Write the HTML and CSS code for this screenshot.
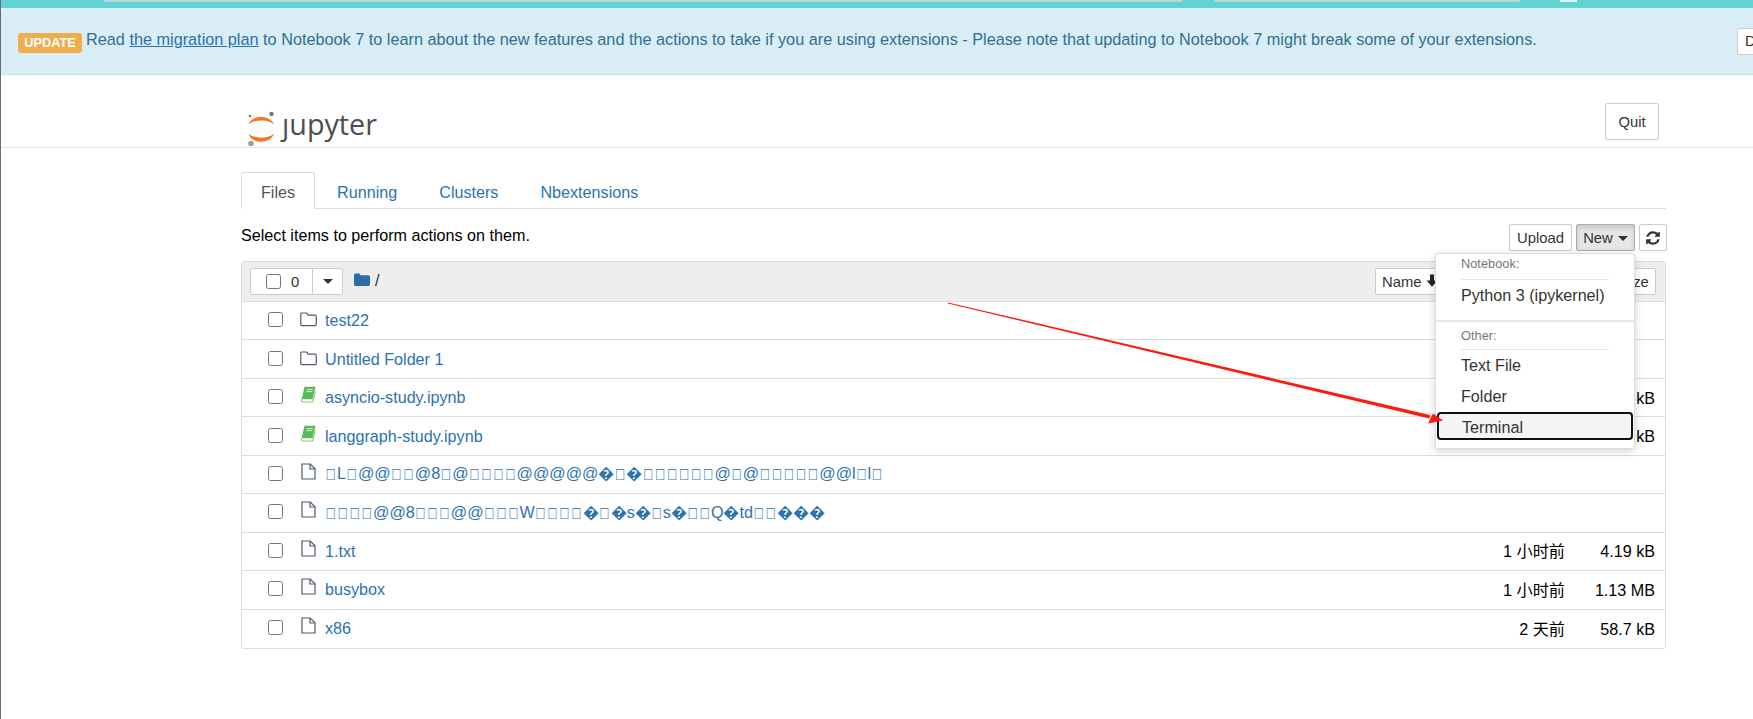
FILE: index.html
```html
<!DOCTYPE html>
<html lang="en">
<head>
<meta charset="utf-8">
<title>Jupyter Home</title>
<link rel="stylesheet" href="styles.css">
</head>
<body>
<svg class="defs" width="0" height="0" aria-hidden="true">
  <defs>
    <symbol id="i-folder" viewBox="0 0 17 15"><path d="M1.8 13.600h13.400a1 1 0 0 0 1-1V4.200a1 1 0 0 0-1-1H8.600a1 1 0 0 1-1-.8l-.2-.6a1 1 0 0 0-1-.8H1.800a1 1 0 0 0-1 1v10.600a1 1 0 0 0 1 1z" fill="none" stroke="#4d5a6c" stroke-width="1.200"/></symbol>
    <symbol id="i-book" viewBox="0 0 16 17"><path d="M4 .8h11l-3 12.400H1.200L4 .8z" fill="#5cb85c"/><path d="M1.200 13.200c-.8 1.600 0 2.800 1.400 2.800h9.600l2.600-11" fill="none" stroke="#8ccf7e" stroke-width="1.200"/><path d="M6.300 3.600h6M5.800 5.600h6" stroke="#d6efd2" stroke-width="1"/></symbol>
    <symbol id="i-file" viewBox="0 0 15 17"><path d="M1 1h8.200L14 5.800V16H1V1z" fill="none" stroke="#4d5a6c" stroke-width="1.200"/><path d="M9 1v5h5" fill="none" stroke="#4d5a6c" stroke-width="1.200"/></symbol>
  </defs>
</svg>

<div class="chrome-strip">
  <span class="tab-a"></span><span class="tab-b"></span><span class="tab-c"></span>
</div>

<div class="alert">
  <span class="label">UPDATE</span>
  <span class="alert-text">Read <a class="alert-link" href="#">the migration plan</a> to Notebook 7 to learn about the new features and the actions to take if you are using extensions - Please note that updating to Notebook 7 might break some of your extensions.</span>
  <button class="btn dismiss">Dismiss</button>
</div>

<header class="site-header">
  <div class="header-inner">
    <svg class="logo" width="132" height="36" viewBox="0 0 132 36" role="img" aria-label="Jupyter">
      <path d="M1.500 13.500C4 3.500 24 3.500 27 13.500 22 8 7 8 1.500 13.500z" fill="#f37726"/>
      <path d="M1.500 22.500C4 33.500 24 33.500 27 22.500 22 28 7 28 1.500 22.500z" fill="#f37726"/>
      <circle cx="24.500" cy="3" r="2.200" fill="#767677"/>
      <circle cx="3" cy="5" r="1.300" fill="#767677"/>
      <circle cx="4" cy="32.500" r="2.800" fill="#9e9e9e"/>
      <text class="logo-text" x="35" y="24" textLength="95" lengthAdjust="spacingAndGlyphs">ȷupyter</text>
    </svg>
    <button class="btn quit">Quit</button>
  </div>
</header>

<main class="container">
  <nav class="tabs">
    <a class="tab active" href="#">Files</a>
    <a class="tab" href="#">Running</a>
    <a class="tab" href="#">Clusters</a>
    <a class="tab" href="#">Nbextensions</a>
  </nav>

  <div class="toolbar">
    <span class="hint">Select items to perform actions on them.</span>
    <div class="toolbar-actions">
      <button class="btn tb-btn">Upload</button>
      <button class="btn tb-btn new">New <i class="caret"></i></button>
      <button class="btn tb-btn refresh" aria-label="Refresh">
        <svg width="16" height="16" viewBox="0 0 1792 1792"><path fill="#333" d="M1639 1056q0 5-1 7-64 268-268 434.5t-478 166.5q-146 0-282.5-55t-243.5-157l-129 129q-19 19-45 19t-45-19-19-45v-448q0-26 19-45t45-19h448q26 0 45 19t19 45-19 45l-137 137q71 66 161 102t187 36q134 0 250-65t186-179q11-17 53-117 8-23 30-23h192q13 0 22.5 9.5t9.5 22.5zm25-800v448q0 26-19 45t-45 19h-448q-26 0-45-19t-19-45 19-45l138-138q-148-137-349-137-134 0-250 65t-186 179q-11 17-53 117-8 23-30 23h-199q-13 0-22.5-9.5t-9.5-22.5v-7q65-268 270-434.5t480-166.5q146 0 284 55.5t245 156.5l130-129q19-19 45-19t45 19 19 45z"/></svg>
      </button>
    </div>
  </div>

  <section class="list">
    <div class="list-head">
      <div class="select-group">
        <span class="select-main"><input type="checkbox" class="cb"><span class="count">0</span></span>
        <span class="select-caret"><i class="caret"></i></span>
      </div>
      <svg class="crumb-folder" width="16" height="13" viewBox="0 0 16 13"><path fill="#296eaa" d="M0 2a1.600 1.600 0 0 1 1.600-1.600h3.200A1.600 1.600 0 0 1 6.400 2v.3h8A1.600 1.600 0 0 1 16 3.900v7.500A1.600 1.600 0 0 1 14.400 13H1.600A1.600 1.600 0 0 1 0 11.400z"/></svg>
      <span class="crumb">/</span>
      <div class="sort-group">
        <button class="btn sort sort-name">Name
          <svg width="12" height="13" viewBox="0 0 11 12"><path fill="#222" d="M3.700.5h3.600v5.600h3.200L5.500 11.700.5 6.100h3.200z"/></svg>
        </button>
        <button class="btn sort sort-mod">Last Modified</button>
        <button class="btn sort sort-size">Size</button>
      </div>
    </div>

    <div class="row"><input type="checkbox" class="cb"><svg class="ficon folder" width="17" height="15"><use href="#i-folder"/></svg><a class="fname" href="#">test22</a></div>
    <div class="row"><input type="checkbox" class="cb"><svg class="ficon folder" width="17" height="15"><use href="#i-folder"/></svg><a class="fname" href="#">Untitled Folder 1</a></div>
    <div class="row"><input type="checkbox" class="cb"><svg class="ficon" width="17" height="17"><use href="#i-book"/></svg><a class="fname" href="#">asyncio-study.ipynb</a><span class="fsize">kB</span></div>
    <div class="row"><input type="checkbox" class="cb"><svg class="ficon" width="17" height="17"><use href="#i-book"/></svg><a class="fname" href="#">langgraph-study.ipynb</a><span class="fsize">kB</span></div>
    <div class="row"><input type="checkbox" class="cb"><svg class="ficon" width="17" height="17"><use href="#i-file"/></svg><a class="fname" href="#"><b class="t">&#xE000;</b>L<b class="t">&#xE000;</b>@@<b class="t">&#xE000;</b><b class="t">&#xE000;</b>@8<b class="t">&#xE000;</b>@<b class="t">&#xE000;</b><b class="t">&#xE000;</b><b class="t">&#xE000;</b><b class="t">&#xE000;</b>@@@@@�<b class="t">&#xE000;</b>�<b class="t">&#xE000;</b><b class="t">&#xE000;</b><b class="t">&#xE000;</b><b class="t">&#xE000;</b><b class="t">&#xE000;</b><b class="t">&#xE000;</b>@<b class="t">&#xE000;</b>@<b class="t">&#xE000;</b><b class="t">&#xE000;</b><b class="t">&#xE000;</b><b class="t">&#xE000;</b><b class="t">&#xE000;</b>@@l<b class="t">&#xE000;</b>l<b class="t">&#xE000;</b></a></div>
    <div class="row"><input type="checkbox" class="cb"><svg class="ficon" width="17" height="17"><use href="#i-file"/></svg><a class="fname" href="#"><b class="t">&#xE000;</b><b class="t">&#xE000;</b><b class="t">&#xE000;</b><b class="t">&#xE000;</b>@@8<b class="t">&#xE000;</b><b class="t">&#xE000;</b><b class="t">&#xE000;</b>@@<b class="t">&#xE000;</b><b class="t">&#xE000;</b><b class="t">&#xE000;</b>W<b class="t">&#xE000;</b><b class="t">&#xE000;</b><b class="t">&#xE000;</b><b class="t">&#xE000;</b>�<b class="t">&#xE000;</b>�s�<b class="t">&#xE000;</b>s�<b class="t">&#xE000;</b><b class="t">&#xE000;</b>Q�td<b class="t">&#xE000;</b><b class="t">&#xE000;</b>���</a></div>
    <div class="row"><input type="checkbox" class="cb"><svg class="ficon" width="17" height="17"><use href="#i-file"/></svg><a class="fname" href="#">1.txt</a><span class="fdate">1 小时前</span><span class="fsize">4.19 kB</span></div>
    <div class="row"><input type="checkbox" class="cb"><svg class="ficon" width="17" height="17"><use href="#i-file"/></svg><a class="fname" href="#">busybox</a><span class="fdate">1 小时前</span><span class="fsize">1.13 MB</span></div>
    <div class="row"><input type="checkbox" class="cb"><svg class="ficon" width="17" height="17"><use href="#i-file"/></svg><a class="fname" href="#">x86</a><span class="fdate">2 天前</span><span class="fsize">58.7 kB</span></div>
  </section>
</main>

<div class="menu">
  <div class="menu-head">Notebook:</div>
  <a class="menu-item first" href="#">Python 3 (ipykernel)</a>
  <div class="menu-sep"></div>
  <div class="menu-head other">Other:</div>
  <a class="menu-item" href="#">Text File</a>
  <a class="menu-item" href="#">Folder</a>
  <a class="menu-item focus" href="#">Terminal</a>
</div>

<svg class="annotation" width="1753" height="719" viewBox="0 0 1753 719" aria-hidden="true">
  <path d="M948 302.500L1430 415 1429.300 418.500 948 303.500z" fill="#ff1a0f"/>
  <path d="M1428 423.500L1433 413.500 1443 420.500z" fill="#ff1a0f"/>
</svg>
</body>
</html>
```

FILE: styles.css
```css
* { box-sizing: border-box; }
html, body { margin: 0; padding: 0; }
body {
  position: relative;
  width: 1753px;
  height: 719px;
  overflow: hidden;
  background: #fff;
  color: #000;
  font-family: "Liberation Sans", "Noto Sans CJK SC", sans-serif;
  font-size: 16.150px;
  line-height: 20px;
  border-left: 1px solid #6b6b6b;
}
.defs { position: absolute; }
a { color: #2c72ae; text-decoration: none; }

.chrome-strip {
  display: flex;
  height: 8px;
  margin-left: -1px;
  padding-left: 103px;
  background: #62d2d4;
}
.chrome-strip span { display: block; height: 2px; background: #b3d9d8; }
.tab-a { width: 1080px; border-radius: 0 0 6px 6px; }
.tab-b { width: 306px; margin-left: 31px; border-radius: 0 0 6px 6px; }
.tab-c { width: 17px; margin-left: 40px; background: #dff3f2 !important; }

.alert {
  display: flex;
  align-items: center;
  height: 67px;
  padding-left: 17px;
  overflow: hidden;
  background: #d9edf7;
  border-bottom: 1px solid #bce8f1;
  border-top-left-radius: 4px;
  color: #31708f;
}
.label {
  flex: none;
  width: 64px;
  height: 20px;
  margin-top: 3px;
  background: #f0ad4e;
  border-radius: 3px;
  color: #fff;
  font-size: 12.800px;
  font-weight: bold;
  line-height: 20px;
  text-align: center;
}
.alert-text { flex: none; width: 1655px; padding-left: 4px; margin-top: -5px; font-size: 16.250px; }
.alert-link { text-decoration: underline; }

.btn {
  background: #fff;
  border: 1px solid #ccc;
  border-radius: 2px;
  color: #333;
  font: inherit;
  font-size: 14.800px;
  padding: 0;
}
.dismiss { flex: none; width: 70px; height: 27px; padding: 0 7px; text-align: left; }

.site-header { height: 73px; border-bottom: 1px solid #e7e7e7; }
.header-inner {
  display: flex;
  align-items: flex-start;
  justify-content: space-between;
  width: 1425px;
  height: 100%;
  margin-left: 240px;
  padding-right: 7px;
}
.logo { margin: 36px 0 0 6px; overflow: visible; }
.logo-text { font-family: "Open Sans", sans-serif; font-size: 30px; fill: #4e4e4e; }
.quit { width: 54px; height: 37px; margin-top: 28px; }

.container { width: 1425px; margin-left: 240px; padding-top: 24px; }

.tabs { display: flex; height: 37px; gap: 2px; border-bottom: 1px solid #ddd; }
.tab { height: 37px; padding: 9px 19px 0; border: 1px solid transparent; border-radius: 3px 3px 0 0; }
.tab.active { color: #555; background: #fff; border-color: #ddd #ddd #fff; }

.toolbar { display: flex; align-items: center; justify-content: space-between; height: 27px; margin: 15px 0 10px; }
.toolbar-actions { display: flex; gap: 4px; }
.hint { margin-top: -5px; }
.tb-btn { height: 27px; padding: 0 7px; }
.new { width: 59px; padding: 0 6px; background: #e6e6e6; border-color: #adadad; box-shadow: inset 0 3px 5px rgba(0,0,0,.125); white-space: nowrap; }
.refresh { width: 28px; display: flex; align-items: center; justify-content: center; margin-right: -1px; padding: 0; }
.caret {
  display: inline-block;
  width: 0;
  height: 0;
  margin-left: 1px;
  vertical-align: middle;
  border-top: 5px solid #333;
  border-left: 5px solid transparent;
  border-right: 5px solid transparent;
}

.list { border: 1px solid #ddd; border-radius: 3px; }
.list-head {
  display: flex;
  align-items: center;
  height: 40px;
  padding-left: 8px;
  background: #eee;
  border-bottom: 1px solid #ddd;
}
.select-group {
  display: flex;
  width: 93px;
  height: 27px;
  background: #fff;
  border: 1px solid #ccc;
  border-radius: 2px;
}
.select-main { display: flex; align-items: center; width: 62px; padding-left: 15px; border-right: 1px solid #ccc; }
.select-main .cb { margin: 0 10px 0 0; }
.count { color: #333; font-size: 14.800px; }
.select-caret { display: flex; align-items: center; justify-content: center; flex: 1; }
.crumb-folder { margin: -5px 0 0 11px; }
.crumb { margin: -3px 0 0 5px; color: #333; }
.sort-group { display: flex; width: 281px; height: 27px; margin-left: auto; margin-right: 9px; }
.sort { height: 27px; padding: 0 6px; text-align: left; white-space: nowrap; }
.sort-name { width: 72px; }
.sort-mod { flex: 1; border-left: 0; overflow: hidden; }
.sort-size { width: 42px; border-left: 0; }

.cb { width: 15px; height: 15px; margin: -2px 0 0; flex: none; }
.row {
  display: flex;
  align-items: center;
  height: 38.440px;
  padding: 0 10px 0 26px;
  border-bottom: 1px solid #ddd;
}
.row:last-child { border-bottom: 0; }
.ficon { flex: none; margin: -6px 0 0 17px; }
.ficon.folder { margin-top: -2px; }
.fname { flex: 1; margin: -1px 0 0 8px; white-space: nowrap; }
.fdate { flex: none; white-space: nowrap; }
.fsize { flex: none; width: 90px; text-align: right; white-space: nowrap; }
.t { display: inline-block; width: 12px; font-size: 14.400px; font-weight: normal; text-align: center; transform: scaleY(1.100); }

.menu {
  position: absolute;
  left: 1434px;
  top: 253px;
  width: 200px;
  height: 196px;
  background: #fff;
  border: 1px solid #ddd;
  border-radius: 3px;
  box-shadow: 0 2px 8px rgba(0,0,0,.18);
  color: #333;
}
.menu-head {
  margin: 0 25px;
  height: 26px;
  padding-top: 0;
  border-bottom: 1px solid #e5e5e5;
  color: #777;
  font-size: 12.800px;
  line-height: 20px;
}
.menu-head.other { height: 28px; padding-top: 4px; }
.menu-item { display: block; height: 31px; padding: 5px 25px 0; color: #333; white-space: nowrap; }
.menu-item.first { height: 40px; padding-top: 5px; }
.menu-sep { height: 2px; background: #e5e5e5; }
.menu-item.focus {
  height: 28px;
  margin: 0 1px;
  padding: 3px 23px 0;
  background: #f5f5f5;
  border: 2px solid #111;
  border-radius: 4px;
}

.annotation { position: absolute; left: -1px; top: 0; pointer-events: none; }
```
